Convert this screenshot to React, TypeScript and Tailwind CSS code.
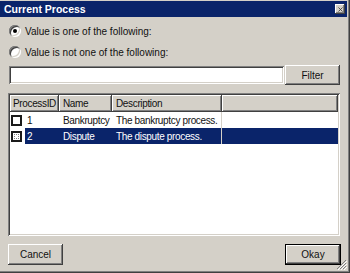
import { X } from "lucide-react";

const raised =
  "shadow-[inset_-1px_-1px_#404040,inset_1px_1px_#ffffff,inset_-2px_-2px_#808080,inset_2px_2px_#d4d0c8]";
const sunken =
  "shadow-[inset_1px_1px_#808080,inset_-1px_-1px_#ffffff,inset_2px_2px_#404040,inset_-2px_-2px_#d4d0c8]";

function Radio({ checked }: { checked?: boolean }) {
  return (
    <span className="w-[12px] h-[12px] rounded-full bg-white shrink-0 shadow-[inset_1px_1px_#808080,inset_-1px_-1px_#ffffff,inset_2px_2px_#404040,inset_-2px_-2px_#d4d0c8] flex items-center justify-center">
      {checked && <span className="w-[4px] h-[4px] rounded-full bg-black" />}
    </span>
  );
}

function Check({ focus }: { focus?: boolean }) {
  return (
    <span className="w-[11px] h-[11px] bg-white border-2 border-[#1a1a1a] shrink-0 flex items-center justify-center">
      {focus && <span className="w-[5px] h-[5px] border border-dotted border-[#808080]" />}
    </span>
  );
}

const rows = [
  { id: "1", name: "Bankruptcy", desc: "The bankruptcy process.", selected: false },
  { id: "2", name: "Dispute", desc: "The dispute process.", selected: true },
];

export default function App() {
  return (
    <div
      className="relative w-[350px] h-[273px] bg-[#d4d0c8] flex flex-col text-[10px] text-[#111] whitespace-nowrap shadow-[inset_-1px_-1px_#404040,inset_-2px_-2px_#808080]"
      style={{ fontFamily: '"Liberation Sans", Arial, sans-serif' }}
    >
      {/* title bar */}
      <div className="shrink-0 mt-px mr-[3px] h-[16px] bg-[#0a246a] flex items-center pl-[4px] pr-[2px]">
        <span className="text-white font-bold text-[10.5px] flex-1 leading-none">Current Process</span>
        <span className={`w-[10px] h-[10px] bg-[#d4d0c8] flex items-center justify-center ${raised}`}>
          <X size={7} strokeWidth={3} className="text-[#404040]" />
        </span>
      </div>

      {/* radios */}
      <div className="shrink-0 flex flex-col pl-[9px] mt-[8px] gap-[9px]">
        <label className="flex items-center gap-[4px] h-[12px]">
          <Radio checked />
          <span>Value is one of the following:</span>
        </label>
        <label className="flex items-center gap-[4px] h-[12px]">
          <Radio />
          <span>Value is not one of the following:</span>
        </label>
      </div>

      {/* filter row */}
      <div className="shrink-0 flex items-center pl-[9px] pr-[10px] mt-[7px] gap-[1px]">
        <div className={`flex-1 h-[18px] bg-white ${sunken}`} />
        <button className={`w-[55px] h-[20px] bg-[#d4d0c8] ${raised}`}>Filter</button>
      </div>

      {/* list */}
      <div className={`shrink-0 ml-[8px] mr-[10px] mt-[8px] h-[143px] bg-white p-[2px] tracking-[-0.35px] ${sunken}`}>
        <div className="flex h-[17px] bg-[#d4d0c8]">
          <div className={`w-[49px] pl-[3px] flex items-center ${raised}`}>ProcessID</div>
          <div className={`w-[53px] pl-[4px] flex items-center ${raised}`}>Name</div>
          <div className={`w-[110px] pl-[4px] flex items-center ${raised}`}>Description</div>
          <div className={`flex-1 ${raised}`} />
        </div>
        {rows.map((r) => (
          <div key={r.id} className="flex h-[16px] items-center">
            <div className="w-[15px] pl-[1px] flex items-center">
              <Check focus={r.selected} />
            </div>
            <div
              className={`flex-1 flex h-full items-center ${
                r.selected ? "bg-[#0a246a] text-white" : ""
              }`}
            >
              <div className="w-[34px] pl-[2px]">{r.id}</div>
              <div className="w-[53px] pl-[4px]">{r.name}</div>
              <div className="w-[110px] pl-[4px] h-full flex items-center border-r border-[#d4d0c8]">
                {r.desc}
              </div>
            </div>
          </div>
        ))}
      </div>

      {/* bottom buttons */}
      <div className="shrink-0 flex justify-between pl-[8px] pr-[9px] mt-[8px]">
        <button className={`w-[55px] h-[21px] bg-[#d4d0c8] ${raised}`}>Cancel</button>
        <button className="w-[56px] h-[21px] bg-[#d4d0c8] border border-black shadow-[inset_-1px_-1px_#404040,inset_1px_1px_#ffffff,inset_-2px_-2px_#808080]">
          Okay
        </button>
      </div>

      {/* size grip */}
      <svg className="absolute right-[3px] bottom-[3px]" width="11" height="11" viewBox="0 0 11 11">
        <path d="M10 1 L1 10 M10 4 L4 10 M10 7 L7 10" stroke="#808080" strokeWidth="1" />
        <path d="M11 2 L2 11 M11 5 L5 11 M11 8 L8 11" stroke="#ffffff" strokeWidth="1" />
      </svg>
    </div>
  );
}
